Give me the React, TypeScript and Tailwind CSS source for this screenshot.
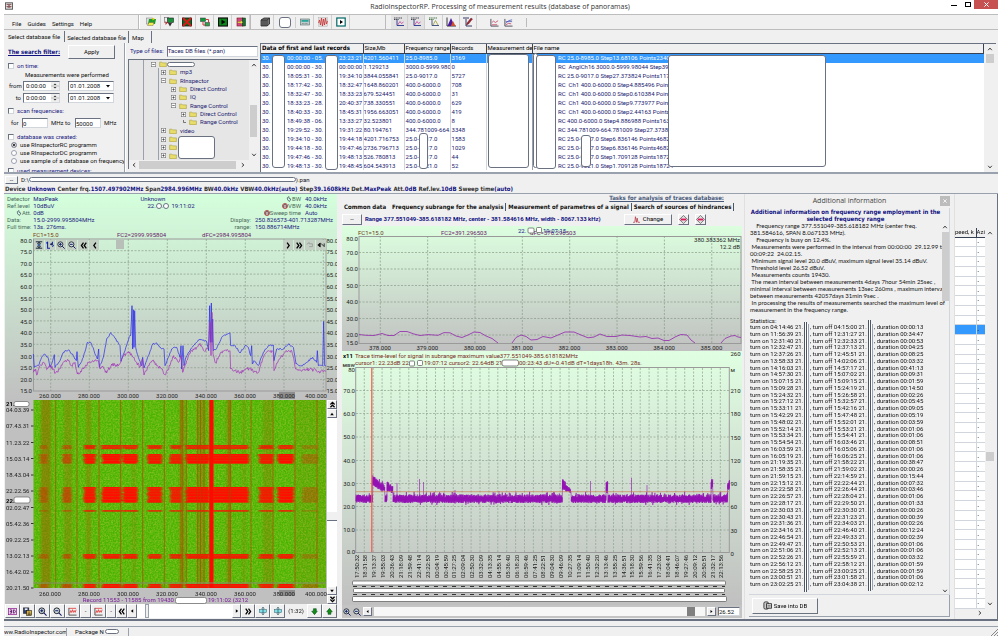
import React from 'react';

/* ---------- helpers ---------- */

function seeded(seed: number) {
  let s = seed;
  return () => {
    s = (s * 16807) % 2147483647;
    return s / 2147483647;
  };
}

type Pt = [number, number];

function jitter(keys: Pt[], step: number, amp: number, seed: number): string {
  const rnd = seeded(seed);
  const out: string[] = [];
  for (let i = 0; i < keys.length - 1; i++) {
    const [x0, y0] = keys[i];
    const [x1, y1] = keys[i + 1];
    const n = Math.max(1, Math.round((x1 - x0) / step));
    for (let k = 0; k < n; k++) {
      const t = k / n;
      const j = k === 0 ? 0 : (rnd() - 0.5) * amp;
      out.push(`${(x0 + (x1 - x0) * t).toFixed(2)},${(y0 + (y1 - y0) * t + j).toFixed(2)}`);
    }
  }
  const last = keys[keys.length - 1];
  out.push(`${last[0]},${last[1]}`);
  return out.join(' ');
}

const third = (keys: Pt[]): Pt[] => keys.map(([x, y]) => [x / 3, 170 + y / 3]);

const strong = "font-['DejaVu_Sans_Condensed','DejaVu_Sans',sans-serif] font-bold";

function Blank({ className }: { className: string }) {
  return <span aria-hidden="true" className={`block rounded-[3px] border border-gray-500 bg-white ${className}`} />;
}

const raised =
  'flex items-center justify-center border border-t-white border-l-white border-r-gray-500 border-b-gray-500 bg-[#f0f0f0] text-black';

function Glyph({ children, size = 'size-[9px]' }: { children: React.ReactNode; size?: string }) {
  return (
    <svg viewBox="0 0 10 10" className={size} aria-hidden="true">
      {children}
    </svg>
  );
}

function Chevron({ dir }: { dir: 'up' | 'down' | 'left' | 'right' }) {
  const d = { up: 'M2 7 L5 3.5 L8 7', down: 'M2 3 L5 6.5 L8 3', left: 'M7 2 L3.5 5 L7 8', right: 'M3 2 L6.5 5 L3 8' }[dir];
  return (
    <Glyph size="size-[6px]">
      <path d={d} fill="none" stroke="#333" strokeWidth="1.6" />
    </Glyph>
  );
}

/* ---------- icons ---------- */

const icons: Record<string, React.ReactNode> = {
  open: (
    <>
      <rect x="0.5" y="1" width="6" height="6" fill="#ddd" stroke="#777" strokeWidth="0.5" />
      <path d="M3 2h7l-1 5H2z" fill="#1c9a2c" />
      <path d="M3 5.500h5l-1 3H1.500z" fill="#f5ec4a" stroke="#554" strokeWidth="0.4" />
      <path d="M6.500 0.500l2.500 1.500-2.500 1.500" fill="#dfd400" />
    </>
  ),
  copy: (
    <>
      <rect x="0.500" y="0.500" width="4" height="5" fill="#eee" stroke="#666" strokeWidth="0.6" />
      <rect x="3.500" y="1" width="6" height="4.500" fill="#18923a" stroke="#222" strokeWidth="0.6" />
      <path d="M4 6h4l-2 3.500z" fill="#333" />
      <path d="M1.500 4l2 2-2 2" fill="#d22" />
    </>
  ),
  remove: (
    <>
      <rect x="0.500" y="1" width="9" height="8" fill="#0b6b1d" stroke="#111" strokeWidth="0.8" />
      <path d="M1 1l8 8M9 1l-8 8" stroke="#e01818" strokeWidth="1.800" />
    </>
  ),
  transfer: (
    <>
      <rect x="0.500" y="1" width="5" height="3.500" fill="#0a9a3a" stroke="#333" strokeWidth="0.5" />
      <rect x="5" y="5.500" width="4.500" height="3.500" fill="#2fa04f" stroke="#333" strokeWidth="0.5" />
      <path d="M6 2.500h2.500v3M3 5v3h2" fill="none" stroke="#d22" strokeWidth="0.9" />
    </>
  ),
  run: (
    <>
      <rect x="0.500" y="1" width="9" height="8" fill="#0a8a1a" stroke="#111" strokeWidth="1.200" />
      <path d="M3.500 2.500L7.500 5l-4 2.500z" fill="#000" />
    </>
  ),
  exit: (
    <>
      <rect x="1" y="1" width="6" height="8" fill="#d64888" stroke="#7a1010" strokeWidth="0.6" />
      <rect x="6.500" y="1" width="3" height="8" fill="#0a7a2a" stroke="#222" strokeWidth="0.5" />
      <path d="M1.500 4.500h3V3L7 5.200 4.500 7.500V6h-3z" fill="#f3e24a" stroke="#522" strokeWidth="0.3" />
    </>
  ),
  cube: (
    <>
      <path d="M1 3l3-2h5.500v6l-2.500 2H1z" fill="#777" stroke="#111" strokeWidth="0.7" />
      <path d="M1 3h6v6M7 3l2.500-2M3 3v6M5 3v6" fill="none" stroke="#222" strokeWidth="0.7" />
    </>
  ),
  device: (
    <>
      <rect x="0.500" y="2" width="9" height="6" fill="#bcc" stroke="#566" strokeWidth="0.6" />
      <rect x="1.500" y="3" width="7" height="1.800" fill="#2aa59a" />
      <path d="M2 6.500h6" stroke="#777" strokeWidth="0.8" strokeDasharray="0.8 0.6" />
    </>
  ),
  wave: (
    <>
      <rect x="0.500" y="0.500" width="9" height="9" fill="#ddd" stroke="#aaa" strokeWidth="0.4" />
      <path d="M0.500 6l1-3 1 5 1-7 1 8 1-7 1 6 1-7 1 6 1-3" fill="none" stroke="#c22" strokeWidth="0.7" />
    </>
  ),
  play: (
    <>
      <rect x="0.800" y="1" width="8.400" height="8" fill="#fff" stroke="#066" strokeWidth="1.200" />
      <path d="M4 3l3 2-3 2z" fill="#000" />
    </>
  ),
  axis: (
    <>
      <path d="M0 1h8M0 2.500h5" stroke="#334" strokeWidth="0.9" strokeDasharray="1.2 0.5" />
      <path d="M3 3v5.500h7" fill="none" stroke="#22338a" strokeWidth="0.9" />
      <path d="M3.500 8l2.500-3.500 1.500 2L9.500 5" fill="none" stroke="#c4409a" strokeWidth="0.8" />
    </>
  ),
  axisGreen: (
    <>
      <path d="M0 1h8M0 2.500h5" stroke="#363" strokeWidth="0.9" strokeDasharray="1.2 0.5" />
      <path d="M3 3v5.500h7" fill="none" stroke="#347" strokeWidth="0.9" />
      <path d="M4 8l2.500-4.500L9 8" fill="none" stroke="#9a9a30" strokeWidth="0.8" />
    </>
  ),
  peak: (
    <>
      <path d="M1 0.500v8.500h9" fill="none" stroke="#222" strokeWidth="0.9" />
      <path d="M1.500 9L5 1l3.500 8z" fill="#4a1aa0" />
      <path d="M5 9l2-5 2.500 5z" fill="#d0502a" />
    </>
  ),
  edit: (
    <>
      <path d="M0 1h6M3 2v7h6" fill="none" stroke="#225" strokeWidth="0.9" />
      <path d="M4 6l4-5 1.500 1-4 5-2 1z" fill="#a22030" stroke="#522" strokeWidth="0.4" />
    </>
  ),
  chart: (
    <>
      <path d="M1 1v8h8.500" fill="none" stroke="#334" strokeWidth="0.9" />
      <path d="M2 5l2-1.500L6 5l3-2M2 7.500h6" fill="none" stroke="#c23050" strokeWidth="0.8" />
    </>
  ),
  chartBlue: (
    <>
      <path d="M1 1v8h8.500" fill="none" stroke="#334" strokeWidth="0.9" />
      <path d="M2 4h7M2 6l3-3 4-1" fill="none" stroke="#3a49b0" strokeWidth="0.8" />
      <path d="M2 7.500l3-1.500 3 .5" fill="none" stroke="#c23050" strokeWidth="0.8" />
    </>
  ),
  zoomIn: (
    <>
      <circle cx="4.200" cy="4.200" r="3.200" fill="#cdd" stroke="#112" strokeWidth="1" />
      <path d="M2.500 4.200h3.400M4.200 2.500v3.400M6.500 6.500L9.500 9.500" stroke="#111a66" strokeWidth="1.200" />
    </>
  ),
  zoomOut: (
    <>
      <circle cx="4.200" cy="4.200" r="3.200" fill="#cdd" stroke="#112" strokeWidth="1" />
      <path d="M2.500 4.200h3.400M6.500 6.500L9.500 9.500" stroke="#111a66" strokeWidth="1.200" />
    </>
  ),
  three: (
    <>
      <rect x="0.500" y="1.500" width="9" height="7" fill="#f3d8f3" stroke="#8a1a8a" strokeWidth="0.8" />
      <path d="M2 3.200h2v3.600H2M2 5h2M6 3.200v3.600c3 0 3-3.600 0-3.600" fill="none" stroke="#4a0a5a" strokeWidth="0.9" />
    </>
  ),
  disks: (
    <>
      <rect x="0.500" y="1" width="6" height="6" fill="#2b3b70" stroke="#111" strokeWidth="0.6" />
      <rect x="2" y="1.500" width="3" height="2" fill="#eee" />
      <rect x="4" y="4" width="5.500" height="5.500" fill="#d8b040" stroke="#111" strokeWidth="0.6" />
      <path d="M6.700 5v4M5 8h4" stroke="#222" strokeWidth="0.7" />
    </>
  ),
  spectrum: (
    <>
      <path d="M1 1v8h8.500" fill="none" stroke="#222" strokeWidth="0.8" />
      <path d="M1 1.500h8M2 7l1-3 1 2 1-3 1 3 1-2 1 2 1-3" fill="none" stroke="#d22" strokeWidth="0.8" />
    </>
  ),
  expand: (
    <>
      <rect x="0.500" y="3" width="9" height="4" fill="#7fe0e6" stroke="#356" strokeWidth="0.6" />
      <path d="M5 0v10M3.500 2L5 .5 6.500 2M3.500 8L5 9.500 6.500 8" fill="none" stroke="#256" strokeWidth="0.9" />
    </>
  ),
  green: <path d="M3.500 1h4v3.500H9L5 9.500 1 4.500h2.500z" fill="#0f900f" stroke="#042" strokeWidth="0.8" />,
  greenUp: <path d="M3 9h4V5.500h2L5 .5 1 5.500h2z" fill="#0f900f" stroke="#042" strokeWidth="0.8" />,
  height: (
    <>
      <path d="M1 1h8M1 9h8M5 2v6M3 3.500L5 1.500l2 2M3 6.500l2 2 2-2" fill="none" stroke="#123" strokeWidth="1.200" />
      <path d="M3 5h4" stroke="#14a" strokeWidth="1.200" />
    </>
  ),
  shift: (
    <>
      <path d="M2 1v8h3M2 1L.5 3M5 4h3V1M8 7l1.500-2" fill="none" stroke="#1122aa" strokeWidth="1.300" />
      <circle cx="7" cy="4" r="1.300" fill="#224" />
    </>
  ),
  undo: <path d="M1 4l3-2v1.500h4V7H4" fill="none" stroke="#999" strokeWidth="1" />,
  redo: <path d="M1 5l3-2.500v5zM5 3l4 4M9 3v4" fill="#111" stroke="#111" strokeWidth="1" />,
  marker: (
    <>
      <path d="M5 0.500L9.500 5 5 9.500.5 5z" fill="#ddd" stroke="#555" strokeWidth="0.8" />
      <path d="M2 4h6v2H2z" fill="#e0195a" />
    </>
  ),
  pulse: <path d="M0 9h2.500l1-8 1.500 8 1-6 1 6H10" fill="none" stroke="#b02030" strokeWidth="0.9" />,
  badge: (
    <>
      <circle cx="5" cy="5" r="4.200" fill="#e8c8c8" stroke="#a01818" strokeWidth="1.200" />
      <path d="M3 7.500V4l2-2 2 2v3.500" fill="none" stroke="#123" strokeWidth="1.200" />
    </>
  ),
  hand: <path d="M2 3l3-2v3l3 1-2 4-3-2z" fill="#dfe" stroke="#234" strokeWidth="1" />,
  db: (
    <>
      <rect x="1" y="1" width="5" height="8" rx="1.500" fill="#ccc" stroke="#222" strokeWidth="0.9" />
      <rect x="4" y="3" width="5.500" height="5" fill="#ddd" stroke="#222" strokeWidth="0.9" />
      <path d="M5 5h3.500M5 6.500h3.500" stroke="#444" strokeWidth="0.600" />
    </>
  ),
};

function Icon({ name, size }: { name: string; size?: string }) {
  return <Glyph size={size}>{icons[name]}</Glyph>;
}

/* ---------- top bars ---------- */

function TitleBar() {
  return (
    <header className="relative flex h-[14px] shrink-0 items-start justify-center bg-white">
      <svg viewBox="0 0 10 10" className="absolute top-[2px] left-[5px] size-[8px]" aria-hidden="true">
        <rect x="0.500" y="1" width="9" height="8" fill="#ddd" stroke="#444" />
        <path d="M2 3h6M2 6l1-1 1 2 1-3 1 3 1-2 1 1" fill="none" stroke="#733" />
      </svg>
      <h1 className="font-['Open_Sans',sans-serif] text-[7px] leading-[13px] text-[#333]">
        RadioInspectorRP. Processing of measurement results (database of panoramas)
      </h1>
      <div className="absolute top-0 right-[2px] flex h-[9px]">
        <button aria-label="Minimize" className="flex w-[14px] items-end justify-center pb-[3px]">
          <span className="h-px w-[6px] bg-black" />
        </button>
        <button aria-label="Maximize" className="flex w-[13px] items-center justify-center">
          <span className="h-[5px] w-[6px] border border-black" />
        </button>
        <button aria-label="Close" className="flex w-[24px] items-center justify-center bg-[#c75050]">
          <svg viewBox="0 0 6 6" className="size-[5px]">
            <path d="M.5.5l5 5M5.500.5l-5 5" stroke="#fff" strokeWidth="1.200" />
          </svg>
        </button>
      </div>
    </header>
  );
}

function ToolButton({ name, pressed }: { name: string; pressed?: boolean }) {
  return (
    <button
      aria-label={name}
      className={`flex h-[14px] w-[18px] items-center justify-center border-r border-[#cfcfcf] ${pressed ? 'bg-[#e2e2e2]' : ''}`}
    >
      <Icon name={name} size="size-[10px]" />
    </button>
  );
}

function Toolbar() {
  return (
    <div className="flex h-[16px] shrink-0 items-center border-y border-[#bdbdbd]">
      <nav className="flex h-[14px] w-[135px] items-center gap-[6px] border-r border-[#bbb] pt-[4px] pl-[8px] leading-[12px]">
        {['File', 'Guides', 'Settings', 'Help'].map((m) => (
          <button key={m}>{m}</button>
        ))}
      </nav>
      <div className="flex w-[111px] border-l border-white pl-[3px]">
        {['open', 'copy', 'remove', 'transfer', 'run', 'exit'].map((n) => (
          <ToolButton key={n} name={n} />
        ))}
      </div>
      <div className="flex w-[135px] items-center border-l border-[#bbb] pl-[5px]">
        <ToolButton name="cube" />
        <span className="flex w-[22px] justify-center border-r border-[#cfcfcf]">
          <Blank className="h-[11px] w-[12px]" />
        </span>
        {['device', 'wave', 'play'].map((n) => (
          <ToolButton key={n} name={n} />
        ))}
      </div>
      <div className="flex w-[92px] border-l border-[#bbb] pl-[5px]">
        {['axis', 'axis', 'axisGreen', 'peak', 'edit'].map((n, i) => (
          <ToolButton key={i} name={n} pressed={i < 2} />
        ))}
      </div>
      <div className="flex w-[50px] border-r border-[#bbb] pl-[13px]">
        <Icon name="chart" />
        <span className="w-[5px]" />
        <Icon name="chartBlue" />
      </div>
    </div>
  );
}

function TopTabs() {
  return (
    <div className="flex h-[13px] shrink-0 items-center pl-[4px] leading-[11px]">
      <button className="border-r border-gray-500 pr-[4px]">Select database file</button>
      <button className="border-r border-gray-500 px-[2px] pt-px">Selected database file</button>
      <button className="border-r border-gray-500 pt-px pr-[7px] pl-[3px]">Map</button>
    </div>
  );
}

/* ---------- search filter ---------- */

const box = 'size-[6px] appearance-none border border-t-gray-500 border-l-gray-500 border-gray-300 bg-white';
const field = 'border border-t-gray-500 border-l-gray-500 border-gray-300 bg-white';

function Check({ label, className }: { label: string; className: string }) {
  return (
    <label className={`flex shrink-0 items-center gap-[3px] text-[#1a1a80] ${className}`}>
      <input type="checkbox" className={box} />
      {label}
    </label>
  );
}

function DateRow({ label, className }: { label: string; className: string }) {
  return (
    <div className={`flex shrink-0 items-center pl-[1px] ${className}`}>
      <span className="w-[12px] text-right">{label}</span>
      <span className={`ml-[2px] flex h-[10px] w-[37px] items-center justify-end ${field}`}>
        <input aria-label={`${label} time`} defaultValue="0:00:00" className="w-[25px] bg-transparent" />
        <svg viewBox="0 0 8 8" className="size-[8px] bg-[#eee]" aria-hidden="true">
          <path d="M2.500 3L4 1.500 5.500 3zM2.500 5L4 6.500 5.500 5z" fill="#333" />
          <path d="M0 4h8" stroke="#999" strokeWidth="0.600" />
        </svg>
      </span>
      <span className={`ml-[8px] flex h-[10px] w-[46px] items-center ${field}`}>
        <input aria-label={`${label} date`} defaultValue="01.01.2008" className="w-[36px] bg-transparent pl-[1px]" />
        <svg viewBox="0 0 6 6" className="size-[6px]">
          <path d="M1 2h4L3 4.500z" />
        </svg>
      </span>
    </div>
  );
}

function SearchFilter() {
  const modes = ['use RInspectorRC programm', 'use RInspectorDC programm', 'use sample of a database on frequency'];
  return (
    <section className="flex w-[121px] shrink-0 flex-col overflow-hidden border-r border-gray-400 pl-[4px] whitespace-nowrap">
      <div className="flex h-[18px] shrink-0 items-center">
        <h2 className={`w-[60px] text-[#101080] underline ${strong}`}>The search filter:</h2>
        <button className={`h-[14px] w-[47px] ${raised}`}>Apply</button>
      </div>
      <Check label="on time:" className="h-[10px]" />
      <p className="h-[8px] shrink-0 pl-[17px] leading-[8px]">Measurements were performed</p>
      <DateRow label="from" className="h-[13px]" />
      <DateRow label="to" className="h-[12px]" />
      <Check label="scan frequencies:" className="h-[14px]" />
      <div className="flex h-[10px] shrink-0 items-center pl-[3px]">
        <label htmlFor="fmin" className="w-[11px]">for</label>
        <input id="fmin" defaultValue="0" className={`h-[10px] w-[26px] ${field}`} />
        <label htmlFor="fmax" className="w-[27px] pl-[3px]">MHz to</label>
        <input id="fmax" defaultValue="50000" className={`h-[10px] w-[26px] ${field}`} />
        <span className="pl-[3px]">MHz</span>
      </div>
      <Check label="database was created:" className="mt-[4px] h-[9px]" />
      {modes.map((m, i) => (
        <label key={m} className="flex h-[8px] shrink-0 items-center gap-[3px] pl-[3px]">
          <input
            type="radio"
            name="mode"
            defaultChecked={i === 0}
            className="size-[6px] shrink-0 appearance-none rounded-full border border-gray-400 bg-white checked:bg-black checked:shadow-[inset_0_0_0_1px_white]"
          />
          {m}
        </label>
      ))}
      <Check label="used measurement devices:" className="mt-[2px] h-[8px]" />
    </section>
  );
}

/* ---------- tree ---------- */

const tree: [number, string, string][] = [
  [0, '-', ''],
  [1, '+', 'mp3'],
  [1, '-', 'RInspector'],
  [2, '+', 'Direct Control'],
  [2, '+', 'IQ'],
  [2, '-', 'Range Control'],
  [3, '+', 'Direct Control'],
  [3, '', 'Range Control'],
  [1, '+', 'video'],
  [1, '+', ''],
  [1, '+', ''],
  [1, '+', ''],
];
const indent = ['pl-[22px]', 'pl-[32px]', 'pl-[42px]', 'pl-[52px]'];

function TreePanel() {
  return (
    <section className="flex w-[135px] shrink-0 flex-col border-l border-white px-[2px] pb-[3px]">
      <div className="flex h-[16px] shrink-0 items-center gap-[3px]">
        <label htmlFor="ftype" className="pl-[2px] text-[#1a1a80]">Type of files:</label>
        <select id="ftype" className={`h-[11px] flex-1 appearance-none text-[#1a1a60] ${field}`}>
          <option>Taces DB files (*.pan)</option>
        </select>
      </div>
      <div className="flex min-h-0 flex-1 flex-col border-t border-l border-gray-500">
        <div className="flex min-h-0 flex-1">
          <ul className="relative flex flex-1 flex-col overflow-hidden bg-[#e6e6e6] text-[#1a1a70]">
            {tree.map(([lvl, sign, name], i) => (
              <li key={i} className={`flex min-h-0 flex-1 items-center gap-[3px] ${indent[lvl]}`}>
                <svg viewBox="0 0 8 8" className="size-[5px] shrink-0">
                  {sign ? <rect x=".5" y=".5" width="7" height="7" fill="#fff" stroke="#777" /> : null}
                  <path d={sign === '+' ? 'M2 4h4M4 2v4' : sign ? 'M2 4h4' : 'M4 0v4h4'} fill="none" stroke="#333" />
                </svg>
                <svg viewBox="0 0 10 8" className="h-[6px] w-[8px] shrink-0">
                  <path d="M.5 1.500h3l1 1h5v5h-9z" fill="#e8dc6a" stroke="#a09430" strokeWidth=".7" />
                </svg>
                <span className="whitespace-nowrap">{name}</span>
              </li>
            ))}
            <li aria-hidden="true"><Blank className="absolute top-[2px] left-[38px] h-[5px] w-[28px]" /></li>
            <li aria-hidden="true"><Blank className="absolute top-[76px] left-[49px] h-[23px] w-[37px]" /></li>
            <li aria-hidden="true" className="absolute inset-y-0 left-[14px] w-px bg-gray-400" />
            <li aria-hidden="true" className="absolute top-[8px] bottom-0 left-[29px] w-px bg-gray-400" />
          </ul>
          <div className="flex w-[9px] flex-col items-center justify-between bg-[#f0f0f0] py-[2px]">
            <Chevron dir="up" />
            <span className="mt-[22px] h-[32px] w-[7px] bg-[#cdcdcd]" />
            <Chevron dir="down" />
          </div>
        </div>
        <div className="flex h-[9px] shrink-0 items-center gap-[2px] bg-[#f0f0f0] px-[2px]">
          <Chevron dir="left" />
          <span className="h-[8px] w-[97px] bg-[#cdcdcd]" />
          <span className="flex-1" />
          <Chevron dir="right" />
          <span className="w-[8px]" />
        </div>
      </div>
    </section>
  );
}

/* ---------- database table ---------- */

const files: string[][] = [
  ['00:00:00 - 05.', '23:23:21', '4201.560411', '25.0-8985.0', '3169', 'RC 25.0-8985.0 Step13.68106 Points2340 K'],
  ['00:00:00 - 30.', '00:00:00', '1.129213', '3000.0-5999.980', '0', 'RC  AnglCh16 3000.0-5999.98044 Step39.'],
  ['18:05:31 - 30.', '19:34:10', '3844.055841', '25.0-9017.0', '5727', 'RC 25.0-9017.0 Step27.373824 Points1170'],
  ['18:17:42 - 30.', '18:32:47', '1648.860201', '400.0-6000.0', '708', 'RC  Ch1 400.0-6000.0 Step4.885496 Points'],
  ['18:32:47 - 30.', '18:33:23', '679.524451', '400.0-6000.0', '31', 'RC  Ch1 400.0-6000.0 Step0.610384 Points'],
  ['18:33:23 - 28.', '20:40:37', '738.330551', '400.0-6000.0', '629', 'RC  Ch1 400.0-6000.0 Step9.773977 Points'],
  ['18:40:33 - 30.', '18:45:31', '1956.663051', '400.0-6000.0', '419', 'RC  Ch1 400.0-6000.0 Step2.44163 Points6'],
  ['18:49:38 - 06.', '13:33:27', '32.523801', '400.0-6000.0', '8', 'RC 400.0-6000.0 Step4.886988 Points1638'],
  ['19:29:52 - 30.', '19:31:22', '80.194761', '344.781009-664.', '3348', 'RC 344.781009-664.781009 Step27.37382'],
  ['19:34:10 - 30.', '19:44:18', '4201.716753', '25.0-9017.0', '1583', 'RC 25.0-9017.0 Step6.836146 Points4682 K'],
  ['19:44:18 - 30.', '19:47:46', '2736.796713', '25.0-9017.0', '1029', 'RC 25.0-9017.0 Step6.836146 Points4682 K'],
  ['19:47:46 - 30.', '19:48:13', '526.780813', '25.0-9017.0', '44', 'RC 25.0-9017.0 Step1.709128 Points18724'],
  ['19:48:13 - 30.', '19:48:45', '604.543913', '25.0-9021.0', '52', 'RC 25.0-9021.0 Step1.709128 Points18724'],
];

function Columns() {
  return (
    <colgroup>
      <col className="w-[26px]" />
      <col className="w-[52px]" />
      <col className="w-[24px]" />
      <col className="w-[41px]" />
      <col className="w-[46px]" />
      <col className="w-[36px]" />
      <col className="w-[46px]" />
      <col className="w-[26px]" />
      <col />
    </colgroup>
  );
}

function DatabaseTable() {
  const th = 'overflow-hidden border-r border-b border-gray-700 p-0 pl-[1px] text-left';
  return (
    <section className="flex min-w-0 flex-1 border-t border-l border-gray-500 bg-white">
      <div className="relative min-w-0 flex-1 overflow-hidden">
        <table className="h-[126px] w-full table-fixed border-collapse leading-[8px] whitespace-nowrap text-[#1a1a70]">
          <Columns />
          <thead className="bg-[#f0f0f0] text-black">
            <tr className="h-[9px]">
              <th colSpan={3} className={`${th} ${strong}`}>Data of first and last records</th>
              <th className={`${th} font-normal`}>Size,Mb</th>
              <th className={`${th} font-normal`}>Frequency range</th>
              <th className={`${th} font-normal`}>Records</th>
              <th className={`${th} font-normal`}>Measurement dev</th>
              <th colSpan={2} className={`${th} font-normal`}>File name</th>
            </tr>
          </thead>
          <tbody>
            {files.map((f, i) => (
              <tr key={i} className={i === 0 ? 'bg-[#3399ff] text-white' : ''}>
                <td className="p-0 pl-[1px]">30.</td>
                <td className="overflow-hidden p-0">{f[0]}</td>
                <td className="overflow-hidden p-0">{f[1]}</td>
                <td className="overflow-hidden border-l border-gray-300 p-0">{f[2]}</td>
                <td className="overflow-hidden border-l border-gray-300 p-0 pl-[1px]">{f[3]}</td>
                <td className="border-l border-gray-300 p-0 pl-[1px]">{f[4]}</td>
                <td className="border-l border-gray-300 p-0" />
                <td className="border-l border-gray-400 p-0" />
                <td className="overflow-hidden p-0 whitespace-pre">{f[5]}</td>
              </tr>
            ))}
          </tbody>
        </table>
        <Blank className="absolute top-[11px] left-[11px] h-[113px] w-[13px]" />
        <Blank className="absolute top-[11px] left-[64px] h-[115px] w-[13px]" />
        <Blank className="absolute top-[89px] left-[158px] h-[36px] w-[9px]" />
        <Blank className="absolute top-[10px] left-[227px] h-[114px] w-[41px]" />
        <Blank className="absolute top-[9px] left-[272px] h-[115px] w-[5px]" />
        <Blank className="absolute top-[11px] left-[275px] h-[114px] w-[20px]" />
        <Blank className="absolute top-[91px] left-[320px] h-[32px] w-[10px]" />
        <Blank className="absolute top-[11px] left-[407px] h-[112px] w-[158px]" />
      </div>
      <div className="flex w-[12px] shrink-0 flex-col items-center bg-[#f0f0f0] py-[2px]">
        <Chevron dir="up" />
        <span className="mt-[2px] h-[9px] w-[8px] bg-[#cdcdcd]" />
        <span className="flex-1" />
        <Chevron dir="down" />
      </div>
    </section>
  );
}

/* ---------- left: spectrum ---------- */

const blue: Pt[] = [[100,555],[103,595],[115,590],[125,565],[133,555],[145,568],[150,595],[158,575],[163,557],[165,595],[180,575],[190,550],[205,543],[220,560],[229,575],[231,548],[235,595],[250,565],[262,520],[272,520],[282,545],[292,570],[296,540],[298,595],[310,565],[320,510],[332,491],[345,508],[360,530],[363,577],[375,545],[388,502],[392,500],[396,410],[398,540],[400,422],[402,535],[404,425],[407,535],[415,565],[425,590],[428,565],[432,597],[445,560],[458,525],[470,522],[485,540],[492,540],[495,590],[505,565],[515,540],[530,535],[540,565],[543,530],[545,600],[549,530],[552,590],[556,570],[560,560],[580,530],[600,510],[620,518],[626,545],[629,410],[631,520],[634,402],[636,520],[638,450],[640,545],[650,538],[665,505],[680,495],[690,492],[692,530],[705,530],[720,552],[735,530],[745,535],[752,560],[755,530],[757,585],[762,575],[775,590],[790,550],[805,530],[820,528],[822,575],[830,540],[850,540],[865,525],[880,535],[888,585],[905,590],[920,580],[938,565],[950,580],[952,545],[955,590],[968,590],[971,457],[974,590],[978,590]];
const magenta: Pt[] = [[100,610],[107,600],[110,618],[120,590],[132,582],[140,602],[150,590],[160,600],[166,612],[180,600],[190,580],[203,571],[215,590],[225,580],[232,615],[250,600],[265,580],[280,578],[295,575],[300,600],[310,595],[320,612],[335,585],[355,590],[362,580],[370,560],[385,548],[400,565],[410,580],[420,595],[427,570],[432,618],[445,590],[458,575],[470,590],[485,600],[495,618],[510,590],[520,560],[535,580],[543,560],[548,610],[560,575],[575,545],[590,535],[600,523],[612,545],[625,535],[630,460],[633,560],[636,430],[639,555],[647,582],[660,555],[675,543],[690,545],[692,600],[705,605],[720,612],[735,600],[752,598],[760,610],[775,610],[790,565],[805,545],[820,550],[822,605],[835,575],[850,555],[865,545],[875,545],[887,600],[905,607],[930,600],[955,608],[978,605]];

const freqX = [50, 89, 128, 167, 206, 245, 284, 316];
const freqLabels = ['260.000', '280.000', '300.000', '320.000', '340.000', '360.000', '380.000', '400.000'];
const freqGrid = [50.7, 89.3, 128.3, 167.3, 206.3, 245.3, 284, 323.3];

function SpectrumChart() {
  const levels = Array.from({ length: 14 }, (_, i) => 80 - i * 5);
  return (
    <svg viewBox="5 232 332 169" className="block w-full" fontSize="6" fill="#222" aria-label="Spectrum">
      <g fill="#6a1a6a">
        <text x="33" y="238" fill="#7a3a10">FC1=15.0</text>
        <text x="117" y="238">FC2=2999.995804</text>
        <text x="202" y="238">dFC=2984.995804</text>
      </g>
      <rect x="33.500" y="240" width="292.500" height="152" fill="none" stroke="#9a9a9a" />
      <g stroke="#8b9c8b" strokeWidth="0.700" strokeDasharray="2 1.500">
        {levels.slice(1, -1).map((l) => (
          <path key={l} d={`M33 ${240 + (80 - l) * 2.34}H326`} />
        ))}
        {freqGrid.map((x) => (
          <path key={x} d={`M${x} 240V392`} />
        ))}
      </g>
      {levels.map((l) => (
        <React.Fragment key={l}>
          <text x="32" y={243.5 + (80 - l) * 2.32} textAnchor="end">{l.toFixed(1)}</text>
          <text x="326.500" y={243.5 + (80 - l) * 2.32}>{l.toFixed(1)}</text>
        </React.Fragment>
      ))}
      <polyline points={jitter(third(blue), 0.8, 1.8, 11)} fill="none" stroke="#2828e8" strokeWidth="0.700" />
      <polyline points={jitter(third(magenta), 0.7, 3.4, 29)} fill="none" stroke="#a030b8" strokeWidth="0.700" />
      <rect x="279" y="393" width="16" height="7" fill="#8e8e8e" />
      {freqLabels.map((f, i) => (
        <text key={f} x={freqX[i]} y="399" textAnchor="middle">{f}</text>
      ))}
    </svg>
  );
}

const bandCols: [number, number, number][] = [
  [40, 47, 0.3], [63, 71, 0.45], [85, 95, 0.95], [103, 120.5, 1], [124, 137, 1], [149, 161, 0.95],
  [171, 181, 0.9], [187, 209, 1], [213, 248, 1], [260, 273, 0.9], [279, 293, 1], [303, 317, 0.25],
];
const bands: [number, number, number][] = [
  [446, 450, 0.85], [455, 464.500, 1], [488, 503.500, 1], [511, 512.500, 0.8], [555, 559.500, 0.9], [585, 589, 1],
];
const vlines = [55.7, 77, 99, 120.7, 142.7, 164.3, 181, 182.7, 186.3, 197.7, 200.5, 204, 229, 230.5, 251, 273, 295, 317];
const times: [number, string][] = [
  [411, '04.03.39'], [427, '07.43.31'], [443.5, '11.23.22'], [459.5, '15.03.14'], [476, '18.43.04'], [492, '22.22.56'],
  [508.5, '02.02.47'], [524.5, '05.42.36'], [541, '09.22.25'], [557, '13.02.13'], [573, '16.42.02'], [589, '20.21.50'],
];

function Waterfall() {
  const rnd = seeded(77);
  return (
    <svg viewBox="5 401 322 204" className="block min-w-0 flex-1" fontSize="6" fill="#222" aria-label="Waterfall">
      <defs>
        <filter id="grain" x="0" y="0" width="100%" height="100%">
          <feTurbulence type="fractalNoise" baseFrequency="0.6" numOctaves="2" seed="4" />
          <feColorMatrix values="0 0 0 0 0.42  0 0 0 0 0.58  0 0 0 0 0.05  1.2 0 0 0 -0.4" />
        </filter>
        <filter id="edge" x="-10%" y="-10%" width="120%" height="120%">
          <feGaussianBlur stdDeviation="1.1 0.3" />
        </filter>
        <clipPath id="plot">
          <rect x="33.500" y="401" width="292.500" height="188" />
        </clipPath>
      </defs>
      <rect x="33.500" y="401" width="292.500" height="188" fill="#4ab400" />
      <g clipPath="url(#plot)">
        <rect x="33.500" y="401" width="292.500" height="188" filter="url(#grain)" />
        <g filter="url(#edge)" fill="#a06000">
          <rect x="41" y="401" width="10" height="188" opacity="0.5" />
          <rect x="64" y="401" width="8" height="188" opacity="0.3" />
          <rect x="86" y="401" width="5" height="188" opacity="0.35" />
          <rect x="132" y="401" width="4" height="188" opacity="0.2" />
          <rect x="179" y="401" width="6" height="188" opacity="0.3" />
          <rect x="197" y="401" width="9" height="188" opacity="0.3" />
          <rect x="226" y="401" width="5" height="188" opacity="0.3" />
          <rect x="242" y="401" width="4" height="188" opacity="0.2" />
          <rect x="263" y="401" width="9" height="188" opacity="0.25" />
          <rect x="295" y="401" width="31" height="188" opacity="0.12" />
        </g>
        <g filter="url(#edge)" fill="#ff0a00">
          {bands.map(([y0, y1, a]) =>
            bandCols.map(([x0, x1, b]) => {
              const slices = Math.max(1, Math.round((y1 - y0) / 1.5));
              const h = (y1 - y0) / slices;
              return Array.from({ length: slices }, (_, k) => {
                const d = rnd() * 2;
                return <rect key={`${y0}-${x0}-${k}`} x={x0 - d} y={y0 + k * h} width={x1 - x0 + d * 1.6} height={h + 0.2} opacity={a * b} />;
              });
            }),
          )}
        </g>
        {vlines.map((x) => (
          <path key={x} d={`M${x} 401V589`} stroke="#b84000" strokeWidth="0.800" opacity="0.8" />
        ))}
        <rect x="209.300" y="401" width="4.200" height="188" fill="#ff0800" />
        <path d="M33 584H326" stroke="#8a8a6a" />
      </g>
      <text x="6" y="407" fontWeight="bold" fill="#000">21.</text>
      <rect x="14" y="402.500" width="15" height="5" rx="2" fill="#fff" stroke="#666" strokeWidth="0.700" />
      {times.map(([y, t]) => (
        <React.Fragment key={t}>
          <text x="6" y={y + 2}>{t}</text>
          <path d={`M31 ${y}h2.500`} stroke="#333" />
        </React.Fragment>
      ))}
      <text x="6" y="504" fontWeight="bold" fill="#000">22.</text>
      <rect x="14" y="498" width="16" height="6" rx="2" fill="#fff" stroke="#666" strokeWidth="0.700" />
      <rect x="279" y="591" width="16" height="6" fill="#8e8e8e" />
      {freqLabels.map((f, i) => (
        <text key={f} x={freqX[i]} y="597" textAnchor="middle">{f}</text>
      ))}
      <text x="174" y="603" fill="#7a1a9a" textAnchor="end">Record 11553 - 11585  from 19430</text>
      <rect x="175.500" y="598.500" width="31" height="6" rx="2" fill="#fff" stroke="#666" strokeWidth="0.700" />
      <text x="208" y="603" fill="#7a1a9a">19:11:02 (3212</text>
    </svg>
  );
}

const overlayBtn = 'flex size-[10px] items-center justify-center bg-[#c4d0c4]';

function Arrows({ d }: { d: string }) {
  return (
    <Glyph size="size-[7px]">
      <path d={d} fill="none" stroke="#000" strokeWidth="1.800" />
    </Glyph>
  );
}

function Param({ icon, name, value, wide }: { icon?: string; name: string; value: string; wide?: boolean }) {
  return (
    <div className="flex items-center justify-end">
      {icon ? <Icon name={icon} size="size-[6px]" /> : null}
      <dt className="text-[#4a6a5a]">{name}</dt>
      <dd className={wide ? 'w-[75px] pl-[4px]' : 'w-[25px] pl-[4px]'}>{value}</dd>
    </div>
  );
}

function LeftPanel() {
  return (
    <section className="flex min-w-0 flex-col pr-[5px]">
      <div className="relative flex flex-col bg-[linear-gradient(#d4ffdc_0px,#c0c0c0_206px)] pt-[1px]">
        <div className="flex h-[36px] justify-between pr-[11px] pl-[2px] leading-[7px] whitespace-nowrap text-[#1a1a80]">
          <dl className="grid w-[100px] grid-cols-[auto_1fr] content-start gap-x-[2px] [&>dt]:text-[#4a6a5a]">
            <dt>Detector</dt><dd>MaxPeak</dd>
            <dt>Ref.level</dt><dd>10dBuV</dd>
            <dt className="flex items-center justify-end"><Icon name="hand" size="size-[6px]" />Att.</dt><dd>0dB</dd>
            <dt>Data:</dt><dd>15.0-2999.995804MHz</dd>
            <dt>Full time:</dt><dd>13s. 276ms.</dd>
          </dl>
          <div className="flex flex-col pl-[12px]">
            <p>Unknown</p>
            <p className="flex items-center">
              <span className="pl-[7px]">22.</span>
              <Blank className="size-[6px]" />
              <span>.</span>
              <Blank className="size-[6px]" />
              <span className="pl-[2px]">19:11:02</span>
            </p>
          </div>
          <dl className="flex w-[110px] flex-col">
            <Param icon="hand" name="BW" value="40.0kHz" />
            <Param icon="badge" name="VBW" value="40.0kHz" />
            <Param icon="badge" name="Sweep time" value="Auto" />
            <Param name="Display:" value="250.826573-401.713287MHz" wide />
            <Param name="range:" value="150.886714MHz" wide />
          </dl>
        </div>
        <SpectrumChart />
        <div className="absolute top-[46px] right-[11px] left-[29px] flex gap-[1px]">
          <button aria-label="Fit height" className={overlayBtn}><Icon name="height" size="size-[8px]" /></button>
          <button aria-label="Shift" className={overlayBtn}><Icon name="shift" size="size-[8px]" /></button>
          <button aria-label="Zoom in" className={overlayBtn}><Icon name="zoomIn" size="size-[8px]" /></button>
          <button aria-label="Zoom out" className={overlayBtn}><Icon name="zoomOut" size="size-[8px]" /></button>
          <button aria-label="Fast back" className={overlayBtn}><Arrows d="M5 1L2 5l3 4M9 1L6 5l3 4" /></button>
          <button aria-label="Back" className={overlayBtn}><Arrows d="M7 1L4 5l3 4" /></button>
          <span className="ml-[16px] h-[9px] w-[8px] bg-[#b8bfb8]" />
          <span className="flex-1" />
          <button aria-label="Forward" className={overlayBtn}><Arrows d="M3 1l3 4-3 4" /></button>
          <button aria-label="Fast forward" className={overlayBtn}><Arrows d="M1 1l3 4-3 4M5 1l3 4-3 4" /></button>
          <button aria-label="Undo" className={overlayBtn}><Icon name="undo" size="size-[8px]" /></button>
          <button aria-label="Redo" className={overlayBtn}><Icon name="redo" size="size-[8px]" /></button>
        </div>
      </div>
      <div className="flex bg-[#c0c0c0]">
        <Waterfall />
        <div className="flex w-[10px] shrink-0 flex-col bg-white">
          <button aria-label="Top" className={`h-[9px] ${raised}`}><Arrows d="M2 5l3-3 3 3M2 9l3-3 3 3" /></button>
          <button aria-label="Up" className={`h-[9px] ${raised}`}><Glyph size="size-[6px]"><path d="M2 7l3-4 3 4z" /></Glyph></button>
          <span className="mt-[94px] h-[9px] border-b border-gray-500 bg-[#f0f0f0]" />
          <span className="flex-1" />
          <button aria-label="Down" className={`h-[9px] ${raised}`}><Glyph size="size-[6px]"><path d="M2 3l3 4 3-4z" /></Glyph></button>
          <button aria-label="Bottom" className={`h-[9px] ${raised}`}><Arrows d="M2 1l3 3 3-3M2 5l3 3 3-3" /></button>
        </div>
      </div>
      <div className="flex h-[14px] shrink-0 items-stretch">
        {['three', 'disks', 'zoomIn', 'zoomOut', 'spectrum'].map((n) => (
          <button key={n} aria-label={n} className={`w-[15px] ${raised}`}><Icon name={n} /></button>
        ))}
        <button aria-label="Options" className={`w-[11px] ${raised}`}>-</button>
        <button aria-label="Spectrum view" className={`w-[15px] ${raised}`}><Icon name="spectrum" /></button>
        <button aria-label="Options" className={`w-[10px] ${raised}`}>-</button>
        <button aria-label="Fast back" className={`w-[11px] ${raised}`}><Arrows d="M5 1L2 5l3 4M9 1L6 5l3 4" /></button>
        <button aria-label="Back" className={`w-[10px] ${raised}`}><Glyph size="size-[6px]"><path d="M7 2L3 5l4 3z" /></Glyph></button>
        <div className="flex flex-1 bg-white">
          <span className="ml-[8px] w-[4px] border border-gray-400 bg-[#f0f0f0]" />
        </div>
        <button aria-label="Forward" className={`w-[9px] ${raised}`}><Glyph size="size-[6px]"><path d="M3 2l4 3-4 3z" /></Glyph></button>
        <button aria-label="Fast forward" className={`w-[14px] ${raised}`}><Arrows d="M1 1l3 4-3 4M5 1l3 4-3 4" /></button>
        <button aria-label="Stretch" className={`w-[15px] ${raised}`}><Icon name="expand" size="size-[8px]" /></button>
        <button aria-label="Squeeze" className={`w-[15px] ${raised}`}><Icon name="expand" size="size-[8px]" /></button>
        <span className="flex w-[22px] items-center justify-center">(1:32)</span>
        <button aria-label="Next" className={`w-[15px] ${raised}`}><Icon name="green" size="size-[7px]" /></button>
        <button aria-label="Previous" className={`w-[15px] ${raised}`}><Icon name="greenUp" size="size-[7px]" /></button>
      </div>
    </section>
  );
}

/* ---------- centre: analysis ---------- */

const subTrace =
  'M359 335.500 L366 336.300 L374 336.500 L382 334.500 L388 336.500 L394 336.500 L400 332.500 L407 332.500 L414 335 L420 336.500 L428 335.600 L438 336.300 L444 333.600 L450 333.800 L456 337 L462 338.500 L468 336 L474 333 L480 333.500 L486 337 L492 339.500 L498 344 M512 344 L516 338.500 L521 336 L526 337.500 L531 341 L537 340.500 L543 337.500 L551 339 L558 336 L565 333 L574 333 L581 336 L588 338.800 L594 338 L600 335 L607 337.500 L616 337.500 L622 336 L630 336.500 L640 338 L646 337.500 L652 339.500 L658 339 L664 341.500 L669 341.500 L676 337.500 L681 335.500 L687 336 L691 341 L695 344 M721 344 L725 339.500 L731 337 L735 336.500 L738 338 L741 338.500';

function SubrangeChart() {
  return (
    <svg viewBox="342 227 400 125" className="block w-full bg-[linear-gradient(#dcffdf,#c0c0c0)]" fontSize="6" fill="#222" aria-label="Frequency subrange">
      <text x="358" y="236" fill="#6a3a1a">FC1=15.0</text>
      <text x="441" y="236" fill="#6a1a6a">FC2=391.296503</text>
      <text x="530" y="236" fill="#6a1a6a">dFC=376.296503</text>
      <text x="518" y="233.500" fill="#1a1a90">22.</text>
      <text x="543" y="233.500" fill="#1a1a90">19:07:15</text>
      <rect x="528" y="229" width="6" height="5" rx="1" fill="#fff" stroke="#555" strokeWidth="0.700" />
      <rect x="536.500" y="228.500" width="5" height="5" rx="1" fill="#fff" stroke="#555" strokeWidth="0.700" />
      <rect x="359" y="237.500" width="382" height="107" fill="none" stroke="#9a9a9a" />
      <g stroke="#879b87" strokeWidth="0.700" strokeDasharray="2 1.500">
        {[253.5, 270, 286.5, 303, 319.5, 336].map((y) => (
          <path key={y} d={`M359 ${y}H741`} />
        ))}
        {Array.from({ length: 8 }, (_, i) => (
          <path key={i} d={`M${380.3 + i * 47.35} 237V344`} />
        ))}
      </g>
      {[['80.0', 242], ['70.0', 255.5], ['60.0', 272], ['50.0', 288.5], ['40.0', 305], ['30.0', 321.5], ['20.0', 338], ['15.0', 346]].map(([t, y]) => (
        <text key={t} x="358" y={y} textAnchor="end">{t}</text>
      ))}
      {Array.from({ length: 8 }, (_, i) => (
        <text key={i} x={380 + i * 47.35} y="350.500" textAnchor="middle">{`${378 + i}.000`}</text>
      ))}
      <path d={subTrace} fill="none" stroke="#9838b0" strokeWidth="0.900" />
      <text x="740" y="243" textAnchor="end">380.383362 MHz</text>
      <text x="740" y="250" textAnchor="end">12.2 dB</text>
    </svg>
  );
}

const timeLabels =
  '17:50:32 18:31:58 19:13:37 19:55:03 20:36:43 21:18:09 21:59:48 22:41:14 23:22:53 00:04:19 00:45:59 01:27:25 02:09:04 02:50:30 03:32:09 04:13:35 04:55:14 05:36:40 06:18:20 06:59:46 07:41:25 08:22:51 09:04:30 09:46:09 10:27:35 11:09:14 11:50:40 12:32:20 13:13:46 13:55:25 14:36:51 15:18:30 15:59:56 16:41:35 17:23:02 18:04:41 18:46:07 19:27:46 20:09:12 20:50:51 21:32:17 22:13:56'.split(' ');

function levelTrace(): string {
  const rnd = seeded(5);
  const pts: string[] = [];
  for (let x = 356; x < 729.5; x += 0.35) {
    let top = 495.5;
    let bottom = 504;
    if (x > 372.5 && x < 385) {
      top = 476 + (x - 372.5) * 0.85;
      bottom = 487 + (x - 372.5) * 0.5;
    } else if (x > 387 && x < 393) {
      top = 482 + (x - 387) * 0.8;
      bottom = 493 + (x - 387) * 0.2;
    } else if (x > 562.5 && x < 571) {
      top = 480 + (x - 562.5) * 1.2;
      bottom = 491 + (x - 562.5) * 0.4;
    } else if (x > 606 && x < 608) {
      top = 482;
      bottom = 494;
    } else if (x > 711 && x < 713) {
      top = 480;
      bottom = 490;
    } else if (x > 727.5) {
      top = 484;
      bottom = 491;
    }
    const t = top + rnd() * 3 - (rnd() > 0.93 ? 3 : 0);
    const b = bottom - rnd() * 2.5 + (rnd() > 0.95 ? 2 : 0);
    pts.push(`${x.toFixed(2)},${t.toFixed(1)} ${x.toFixed(2)},${b.toFixed(1)}`);
  }
  return pts.join(' ');
}

function LevelChart() {
  return (
    <svg viewBox="342 352 400 254" className="block w-full bg-[linear-gradient(#e0ffe2,#c0c0c0)]" fontSize="6" fill="#222" aria-label="Time and level">
      <text x="343" y="359" fontWeight="bold" fill="#000">x11</text>
      <text x="355" y="359" fill="#7a2a1a">Trace time-level for signal in subrange maximum value377.551049-385.618182MHz</text>
      <text x="355" y="366" fill="#7a2a1a">cursor1: 22.23dB 22.</text>
      <text x="424" y="366" fill="#7a2a1a">19:07:12 cursor2: 22.64dB 21.</text>
      <text x="519" y="366" fill="#7a2a1a">00:23:43  dU=-0.41dB dT=1days18h. 43m. 28s.</text>
      <g fill="#fff" stroke="#555" strokeWidth="0.700">
        <rect x="409.500" y="362" width="5" height="5" rx="1" />
        <rect x="417.500" y="361.500" width="5" height="5" rx="1" />
        <rect x="502" y="361" width="16.500" height="6" rx="2" />
      </g>
      <text x="342.500" y="368" fontWeight="bold" fill="#555">мвw</text>
      <rect x="355.700" y="368.500" width="373.600" height="185" fill="none" stroke="#9a9a9a" />
      <g stroke="#8ea08e" strokeWidth="0.700" strokeDasharray="2 1.500">
        {[391.5, 414.5, 438, 461.5, 484.5, 507.5, 531].map((y) => (
          <path key={y} d={`M356 ${y}H729`} />
        ))}
        {Array.from({ length: 41 }, (_, i) => (
          <path key={i} d={`M${364.3 + i * 8.9} 369V553`} />
        ))}
      </g>
      {[['80', 373], ['70.0', 393.5], ['60.0', 417], ['50.0', 440], ['40.0', 463.5], ['30.0', 486.5], ['20.0', 510], ['10.0', 533], ['0.0', 554.5]].map(([t, y]) => (
        <text key={t} x="355" y={y} textAnchor="end">{t}</text>
      ))}
      {[['260', 356.5], ['м', 373], ['210', 394], ['180', 417], ['150', 440.5], ['120', 464], ['90', 487], ['60', 510], ['30', 533.5], ['0', 557]].map(([t, y]) => (
        <text key={t} x="730.500" y={y}>{t}</text>
      ))}
      <polyline points={levelTrace()} fill="none" stroke="#9410b4" strokeWidth="0.600" />
      <path d="M397 484v14M419.500 480v18M423.500 483v14M590.500 482v14M631.500 479v18M647 486v12M455 491v8M499 492v8" stroke="#9410b4" strokeWidth="0.600" />
      <path d="M356 492.700H729" stroke="#c87848" strokeWidth="0.800" opacity="0.800" />
      <path d="M371.800 369V553" stroke="#f05a4a" strokeWidth="1.200" />
      {timeLabels.map((t, i) => (
        <text key={t} transform={`translate(${358.5 + i * 8.9} 579) rotate(-90)`}>{t}</text>
      ))}
      <path d="M353 587.500H725M353 595.500H725" stroke="#333" strokeDasharray="4 5" />
      <g fill="#fff" stroke="#555" strokeWidth="0.700">
        <rect x="352.500" y="582" width="373" height="4" rx="1" />
        <rect x="353.500" y="589.500" width="371" height="4" rx="1" />
        <rect x="352.500" y="597.500" width="374" height="5" rx="1" />
      </g>
    </svg>
  );
}

function CenterPanel() {
  const tabs = ['Common data', 'Frequency subrange for the analysis', 'Measurement of parametres of a signal', 'Search of sources of hindrances'];
  return (
    <section className="flex min-w-0 flex-col pr-[2px]">
      <p className={`h-[8px] shrink-0 pr-[18px] text-right leading-[8px] text-[#4a5a7a] underline ${strong}`}>Tasks for analysis of traces database:</p>
      <div className={`flex h-[10px] shrink-0 items-center whitespace-nowrap ${strong}`}>
        {tabs.map((t, i) => (
          <button key={t} className={`leading-[8px] ${i > 0 ? 'border-r border-gray-600 px-[2px]' : 'pr-[4px] pl-[2px]'}`}>{t}</button>
        ))}
      </div>
      <div className="flex h-[14px] shrink-0 items-center whitespace-nowrap">
        <button className={`h-[11px] w-[20px] ${raised}`}>--</button>
        <span className="w-[262px] pl-[3px] font-bold text-[#101080]">Range 377.551049-385.618182 MHz, center - 381.584616 MHz, width - 8067.133 kHz)</span>
        <button className={`h-[11px] w-[48px] shrink-0 gap-[3px] ${raised}`}>
          <Icon name="pulse" size="size-[7px]" />
          Change
        </button>
        <button aria-label="Marker left" className={`ml-[6px] size-[11px] ${raised}`}><Icon name="marker" /></button>
        <button aria-label="Marker right" className={`ml-[6px] size-[11px] ${raised}`}><Icon name="marker" /></button>
      </div>
      <SubrangeChart />
      <LevelChart />
      <div className="flex h-[13px] shrink-0 items-center gap-[2px] bg-[#c4c4c4] pr-[2px] pl-[1px]">
        <Icon name="zoomIn" size="size-[8px]" />
        <Icon name="zoomOut" size="size-[8px]" />
        <button aria-label="Scroll left" className={`size-[9px] ${raised}`}><Glyph size="size-[5px]"><path d="M7 2L3 5l4 3z" /></Glyph></button>
        <div className="flex h-[9px] flex-1 justify-end bg-[#f7f7f7] pr-[10px]">
          <span className="w-[8px] bg-[#808080]" />
        </div>
        <button aria-label="Scroll right" className={`size-[9px] ${raised}`}><Glyph size="size-[5px]"><path d="M3 2l4 3-4 3z" /></Glyph></button>
        <input aria-label="Threshold" defaultValue="26.52" className={`h-[9px] w-[22px] ${field}`} />
      </div>
    </section>
  );
}

/* ---------- right: information dialog ---------- */

const stats: [string, string, string][] = (
  '04:14:46 04:15:00 00:00:13|11:56:39 12:31:27 00:34:47|12:31:40 12:32:33 00:00:53|12:32:47 12:37:13 00:04:25|12:37:26 12:45:51 00:08:25|13:58:33 14:02:06 00:03:32|14:16:03 14:57:17 00:41:13|14:57:30 15:07:02 00:09:31|15:07:15 15:09:15 00:01:59|15:09:28 15:24:19 00:14:50|15:24:32 15:26:58 00:02:26|15:27:12 15:32:57 00:05:45|15:33:11 15:42:16 00:09:05|15:42:29 15:47:48 00:05:19|15:48:02 15:52:01 00:03:59|15:52:14 15:53:21 00:01:06|15:53:34 15:54:41 00:01:06|15:54:54 16:03:46 00:08:51|16:03:59 16:05:06 00:01:06|16:05:19 16:06:25 00:01:06|21:19:35 21:58:22 00:38:47|21:58:35 21:59:02 00:00:26|21:59:15 22:14:59 00:15:44|22:15:12 22:22:44 00:07:32|22:22:58 22:26:44 00:03:46|22:26:57 22:28:04 00:01:06|22:28:17 22:29:50 00:01:33|22:30:03 22:30:30 00:00:26|22:30:43 22:31:23 00:00:39|22:31:36 22:34:03 00:02:26|22:34:16 22:46:40 00:12:24|22:46:54 22:49:33 00:02:39|22:49:47 22:50:53 00:01:06|22:51:06 22:52:13 00:01:06|22:52:26 22:55:59 00:03:32|22:56:12 22:58:12 00:01:59|22:58:25 23:00:25 00:01:59|23:00:51 23:01:58 00:01:06|23:02:25 23:04:38 00:02:12'
).split('|').map((r) => r.split(' ') as [string, string, string]);

function InfoDialog() {
  const lines = [
    '    Frequency range 377.551049-385.618182 MHz (center freq.',
    '381.584616, SPAN 8.067133 MHz).',
    '    Frequency is busy on 12.4%.',
    ' Measurements were performed in the interval from 00:00:00  29.12.99 to',
    '00:09:22  24.02.15.',
    ' Minimum signal level 20.0 dBuV, maximum signal level 35.14 dBuV.',
    ' Threshold level 26.52 dBuV.',
    ' Measurements counts 19430.',
    ' The mean interval between measurements 4days 7hour 54min 25sec ,',
    'minimal interval between measurements 13sec 260ms , maximum interval',
    'between measurements 42057days 31min 9sec .',
    ' In processing the results of measurements searched the maximum level of',
    'measurement in the frequency range.',
  ];
  return (
    <section role="dialog" aria-label="Additional information" className="flex min-h-0 min-w-0 flex-col border-x border-[#e0e0e0] bg-[#f0f0f0] px-[4px] pb-[2px]">
      <div className="flex h-[14px] shrink-0 items-center">
        <h2 className="flex-1 pl-[10px] text-center font-['Open_Sans',sans-serif] text-[7px] text-[#444]">Additional information</h2>
        <button aria-label="Close" className="flex size-[10px] items-center justify-center bg-[#bcbcbc]">
          <svg viewBox="0 0 6 6" className="size-[4px]"><path d="M.5.5l5 5M5.500.5l-5 5" stroke="#fff" strokeWidth="1.200" /></svg>
        </button>
      </div>
      <div className="flex min-h-0 flex-1 border-r border-b border-gray-300">
        <div className="flex min-w-0 flex-1 flex-col pl-[1px] leading-[7px] whitespace-pre">
          <h3 className={`text-center text-[#101080] ${strong}`}>
            Additional information on frequency range employment in the
            <br />
            selected frequency range
          </h3>
          {lines.map((l) => (
            <p key={l} className="shrink-0 font-['Lato',sans-serif]">{l}</p>
          ))}
          <p className="mt-[4px] shrink-0">Statistics:</p>
          <div className="relative mb-[6px] grid min-h-0 flex-1 auto-rows-fr grid-cols-[60px_64px_1fr] leading-[6px]">
            {stats.map(([on, off, dur]) => (
              <React.Fragment key={on}>
                <span>turn on {on} 21.</span>
                <span>, turn off {off} 21.</span>
                <span>, duration {dur}</span>
              </React.Fragment>
            ))}
            <span className="absolute -top-[2px] -bottom-[4px] left-[54px] w-[3px] border-x border-gray-600 bg-white" />
            <span className="absolute top-0 -bottom-[2px] left-[57px] w-[2px] border-r border-gray-400 bg-white" />
            <span className="absolute -top-[4px] -bottom-[3px] left-[118px] w-[3px] border-x border-gray-600 bg-white" />
            <span className="absolute top-0 -bottom-[2px] left-[121px] w-[2px] border-r border-gray-400 bg-white" />
          </div>
        </div>
        <div className="flex w-[8px] shrink-0 flex-col items-center pt-[16px]">
          <Chevron dir="up" />
          <span className="mt-[2px] h-[69px] w-[7px] bg-[#cdcdcd]" />
          <span className="flex-1" />
          <Chevron dir="down" />
        </div>
      </div>
      <div className="flex h-[22px] shrink-0 items-center border-r border-b border-gray-400 pl-[3px]">
        <button className={`h-[16px] w-[66px] gap-[2px] ${raised}`}>
          <Icon name="db" />
          Save into DB
        </button>
      </div>
    </section>
  );
}

function SideTable() {
  return (
    <section className="flex min-h-0 min-w-0 flex-col border-r border-gray-500 pt-[34px] pr-[2px] pb-[2px]">
      <div className="flex min-h-0 flex-1">
        <table className="h-full flex-1 table-fixed border-collapse bg-white leading-[8px] whitespace-nowrap">
          <thead>
            <tr className="h-[9px] bg-[#f0f0f0]">
              <th className="w-[21px] overflow-hidden border-r border-b border-gray-700 p-0 text-left font-normal">peed, k</th>
              <th className="overflow-hidden border-b border-gray-700 p-0 text-left font-normal">Azi</th>
            </tr>
          </thead>
          <tbody>
            {Array.from({ length: 38 }, (_, i) => (
              <tr key={i} className={i === 9 ? 'bg-[#3399ff]' : ''}>
                <td className="border-r border-b border-gray-300 p-0 leading-[6px]" />
                <td className="border-b border-gray-300 p-0 pl-[1px] leading-[6px]">-</td>
              </tr>
            ))}
          </tbody>
        </table>
        <div className="flex w-[10px] shrink-0 flex-col items-center justify-between py-[2px]">
          <Chevron dir="up" />
          <span className="mt-[75px] h-[9px] w-[8px] bg-[#cdcdcd]" />
          <Chevron dir="down" />
        </div>
      </div>
      <div className="flex h-[8px] shrink-0 items-center justify-end pr-[12px]">
        <Chevron dir="right" />
      </div>
    </section>
  );
}

/* ---------- page ---------- */

function DeviceLine() {
  const items = [
    ['Device ', 'Unknown'], ['Center frq.', '1507.497902MHz'], ['Span', '2984.996MHz'], ['BW', '40.0kHz'], ['VBW', '40.0kHz(auto)'],
    ['Step', '39.1608kHz'], ['Det.', 'MaxPeak'], ['Att.', '0dB'], ['Ref.lev.', '10dB'], ['Sweep time', '(auto)'],
  ];
  return (
    <p className={`flex h-[9px] shrink-0 items-center gap-[2px] pl-[1px] whitespace-pre text-[#333] ${strong}`}>
      {items.map(([k, v]) => (
        <span key={k}>{k}<span className="text-[#101080]">{v}</span></span>
      ))}
    </p>
  );
}

export default function App() {
  return (
    <div className="flex h-screen flex-col overflow-hidden bg-white font-['Roboto','Liberation_Sans',sans-serif] text-[6px] leading-[8px] text-[#111]">
      <TitleBar />
      <main className="ml-[4px] mr-[2px] flex min-h-0 flex-1 flex-col bg-[#f0f0f0]">
        <Toolbar />
        <TopTabs />
        <div className="flex h-[131px] shrink-0 border-b-2 border-gray-400 pr-[2px]">
          <SearchFilter />
          <TreePanel />
          <DatabaseTable />
        </div>
        <div className="flex h-[10px] shrink-0 items-center pt-[1px] pl-[1px]">
          <button className={`h-[8px] w-[13px] ${raised}`}>--</button>
          <span className="pl-[3px]">D:\</span>
          <Blank className="h-[5px] w-[267px]" />
          <span>).pan</span>
        </div>
        <DeviceLine />
        <div className="grid min-h-0 flex-1 grid-cols-[minmax(0,337fr)_minmax(0,402fr)_minmax(0,211fr)_minmax(0,43fr)] border-t border-b-2 border-b-gray-500 border-t-gray-400 pl-[1px]">
          <LeftPanel />
          <CenterPanel />
          <InfoDialog />
          <SideTable />
        </div>
        <footer className="mt-[5px] flex h-[10px] shrink-0 items-center border-t border-gray-400">
          <span className="w-[63px] overflow-hidden border-r border-gray-400 whitespace-nowrap">ww.RadioInspector.com</span>
          <span className="flex w-[62px] items-center gap-[1px] border-r border-gray-400 pl-[8px]">
            Package N
            <Blank className="h-[5px] w-[14px]" />
          </span>
          <span className="flex-1" />
          <svg viewBox="0 0 8 8" className="size-[8px]" aria-hidden="true">
            <path d="M1 8L8 1M4 8l4-4M7 8l1-1" stroke="#888" />
          </svg>
        </footer>
      </main>
    </div>
  );
}
